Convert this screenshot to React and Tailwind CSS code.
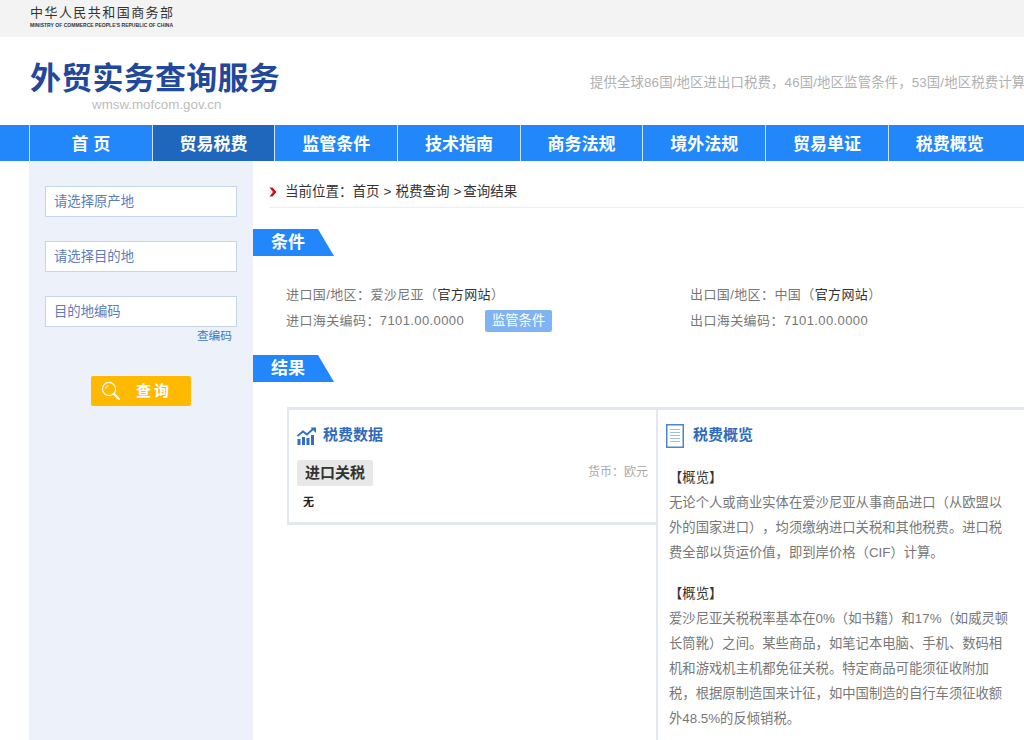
const cjk = "font-['Liberation_Sans','Noto_Sans_CJK_SC',sans-serif] [text-spacing-trim:space-all]";

function Tag({ children }) {
  return (
    <div className="w-[81px] h-[27px] bg-[#2287fb] [clip-path:polygon(0_0,65px_0,81px_100%,0_100%)] pl-[18px] text-white font-bold text-[17px] leading-[27px]">
      {children}
    </div>
  );
}

function Field({ label, className = "" }) {
  return (
    <div className={"w-[192px] h-[31px] bg-white border border-[#c6d6ea] pl-[8px] text-[13.33px] leading-[29px] text-[#5c7cbd] " + className}>
      {label}
    </div>
  );
}

const navItems = ["首 页", "贸易税费", "监管条件", "技术指南", "商务法规", "境外法规", "贸易单证", "税费概览"];

export default function App() {
  return (
    <div className={"w-[1024px] h-[740px] overflow-hidden bg-white " + cjk}>
      <div className="h-[37px] bg-[#f3f3f3] pl-[30px] pt-[5px]">
        <div className="w-[146px] text-[13px] leading-[15px] tracking-[1.45px] text-[#333] whitespace-nowrap">中华人民共和国商务部</div>
        <div className="text-[5.06px] leading-[6px] text-[#333] whitespace-nowrap font-bold mt-[2px]">MINISTRY OF COMMERCE PEOPLE'S REPUBLIC OF CHINA</div>
      </div>

      <div className="h-[88px] flex pl-[30px] pt-[23px] overflow-hidden">
        <div className="w-[560px] shrink-0">
          <div className="text-[31px] leading-[38px] tracking-[0.25px] font-bold text-[#22489b] whitespace-nowrap">外贸实务查询服务</div>
          <div className="pl-[62px] text-[13.33px] leading-[16px] mt-[-1px] text-[#bdbdbd] whitespace-nowrap">wmsw.mofcom.gov.cn</div>
        </div>
        <div className="pt-[13px] text-[13.4px] tracking-[0.12px] leading-[20px] text-[#b0b0b0] whitespace-nowrap">提供全球86国/地区进出口税费，46国/地区监管条件，53国/地区税费计算</div>
      </div>

      <div className="h-[36px] bg-[#2287fb] pl-[29px] flex">
        {navItems.map((n, i) => (
          <div
            key={n}
            className={
              "w-[122.7px] shrink-0 border-l border-[#cfe3fb] text-center text-white font-bold text-[17px] leading-[39px] " +
              (i === 1 ? "bg-[#1f66bd]" : "")
            }
          >
            {n}
          </div>
        ))}
      </div>

      <div className="flex pl-[29px] h-[579px]">
        <div className="w-[224px] shrink-0 bg-[#edf2fa] pl-[16px] pt-[25px]">
          <Field label="请选择原产地" />
          <Field label="请选择目的地" className="mt-[24px]" />
          <Field label="目的地编码" className="mt-[24px]" />
          <div className="w-[187px] text-right text-[11.7px] leading-[14px] mt-[2px] text-[#3b78c0]">查编码</div>
          <div className="ml-[46px] mt-[33px] w-[100px] h-[30px] bg-[#ffb900] rounded-[2px] flex items-center pl-[10px] text-white font-bold">
            <svg width="20" height="20" viewBox="0 0 20 20" fill="none" stroke="#fff" className="shrink-0">
              <circle cx="8" cy="8" r="6.6" strokeWidth="1.2" />
              <path d="M4.5 8a3.5 3.5 0 0 1 3-3.4" strokeWidth="1" />
              <path d="M13 13l5 5" strokeWidth="2.4" strokeLinecap="round" />
            </svg>
            <span className="ml-[15px] text-[15px] tracking-[3px] whitespace-nowrap">查询</span>
          </div>
        </div>

        <div className="w-[800px] shrink-0">
          <div className="h-[47px] ml-[16px] border-b border-[#eeeeee] flex items-center text-[13.5px] text-[#333] whitespace-nowrap pt-[16px]">
            <svg width="8" height="10" viewBox="0 0 8 10" className="shrink-0 mr-[8px]">
              <path d="M0.5 0.5L3.5 0.5L7.5 5L3.5 9.5L0.5 9.5L4 5Z" fill="#cc0f16" />
            </svg>
            <span>当前位置：首页</span>
            <span className="ml-[4px]">&gt;</span>
            <span className="ml-[4px]">税费查询</span>
            <span className="ml-[4px]">&gt;</span>
            <span className="ml-[2px]">查询结果</span>
          </div>

          <div className="mt-[21px]"><Tag>条件</Tag></div>

          <div className="mt-[26px] pl-[33px] flex text-[13px] tracking-[0.4px] leading-[26px] text-[#777] whitespace-nowrap">
            <div className="w-[404px]">
              <div>进口国/地区：爱沙尼亚（<span className="text-[#333]">官方网站</span>）</div>
              <div className="flex items-center">
                <span>进口海关编码：7101.00.0000</span>
                <span className="ml-[21px] w-[67px] h-[22px] bg-[#7fb3f3] rounded-[2px] text-center text-white text-[13.33px] tracking-normal leading-[22px]">监管条件</span>
              </div>
            </div>
            <div>
              <div>出口国/地区：中国（<span className="text-[#333]">官方网站</span>）</div>
              <div>出口海关编码：7101.00.0000</div>
            </div>
          </div>

          <div className="mt-[21px]"><Tag>结果</Tag></div>

          <div className="ml-[34px] mt-[25px] flex items-start w-[800px]">
            <div className="w-[369px] shrink-0 h-[118px] border-y-[3px] border-l-[2px] border-[#e1e8ef] pl-[8px] pr-[8px]">
              <div className="flex items-center h-[50px] pt-[1px]">
                <svg width="20" height="18" viewBox="0 0 20 18" fill="#2f6fc4" className="shrink-0">
                  <rect x="0.5" y="12" width="3" height="6" />
                  <rect x="5" y="10" width="3" height="8" />
                  <rect x="9.5" y="11" width="3" height="7" />
                  <rect x="14" y="8" width="3" height="10" />
                  <path d="M0.5 9L6 4.5L10 7.5L16 2" fill="none" stroke="#2f6fc4" strokeWidth="1.8" />
                  <path d="M13.5 0.5H19V6Z" />
                </svg>
                <span className="ml-[6px] text-[15px] font-bold text-[#2f6bbd] whitespace-nowrap">税费数据</span>
              </div>
              <div className="flex justify-between items-start">
                <div className="w-[76px] h-[26px] bg-[#e8e8e8] rounded-[2px] text-center text-[15px] leading-[26px] font-bold text-[#333]">进口关税</div>
                <div className="text-[12px] leading-[14px] pt-[5px] text-[#aaa] whitespace-nowrap">货币：欧元</div>
              </div>
              <div className="pl-[6px] mt-[9px] text-[11px] leading-[14px] font-bold text-[#222]">无</div>
            </div>

            <div className="w-[400px] shrink-0 h-[340px] border-t-[3px] border-l-[2px] border-[#e1e8ef] pl-[8px]">
              <div className="flex items-center h-[50px] pt-[1px]">
                <svg width="18" height="24" viewBox="0 0 18 24" className="shrink-0">
                  <rect x="0.75" y="0.75" width="16.5" height="22.5" fill="#fff" stroke="#4a86cf" strokeWidth="1.5" />
                  <path d="M4 5.5H14M4 8.5H14M4 11.5H14M4 14.5H14M4 17.5H14" stroke="#9bbde6" strokeWidth="1" />
                </svg>
                <span className="ml-[9px] text-[15px] font-bold text-[#2f6bbd] whitespace-nowrap">税费概览</span>
              </div>
              <div className="w-[340px] ml-[3px] mt-[5px] text-[13.33px] leading-[25px] text-[#777]">
                <div className="text-[#333]">【概览】</div>
                <div>无论个人或商业实体在爱沙尼亚从事商品进口（从欧盟以外的国家进口），均须缴纳进口关税和其他税费。进口税费全部以货运价值，即到岸价格（CIF）计算。</div>
                <div className="text-[#333] mt-[16px]">【概览】</div>
                <div>爱沙尼亚关税税率基本在0%（如书籍）和17%（如威灵顿长筒靴）之间。某些商品，如笔记本电脑、手机、数码相机和游戏机主机都免征关税。特定商品可能须征收附加税，根据原制造国来计征，如中国制造的自行车须征收额外48.5%的反倾销税。</div>
              </div>
            </div>
          </div>
        </div>
      </div>
    </div>
  );
}
